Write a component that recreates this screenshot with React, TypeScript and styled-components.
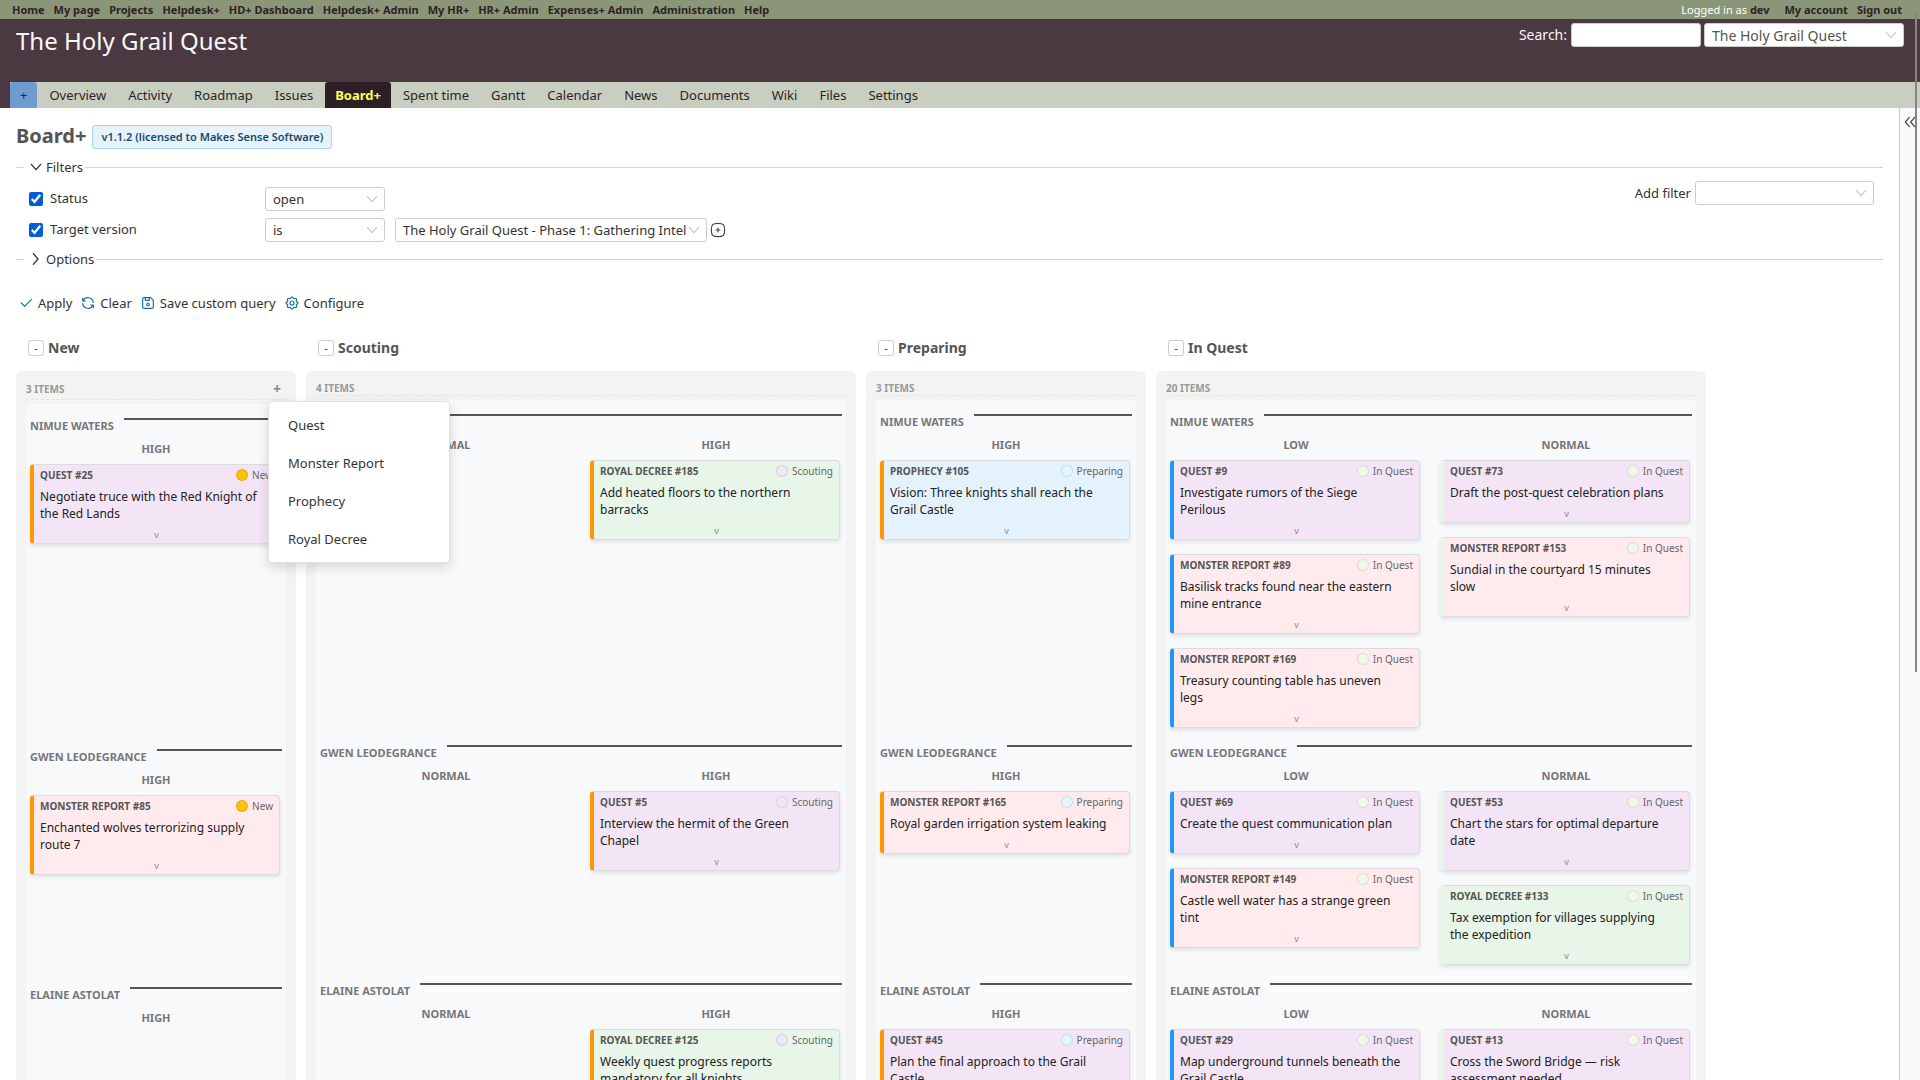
import React from "react";
import styled, { createGlobalStyle, css } from "styled-components";

const FONT = '"Noto Sans", "Open Sans", sans-serif';

const GlobalStyle = createGlobalStyle`
  *, *::before, *::after { box-sizing: border-box; }
  html, body { margin: 0; padding: 0; }
  body { background: #fff; color: #333; font-family: ${FONT}; font-size: 13px; line-height: 16px; }
  button, input, select { font-family: inherit; color: inherit; margin: 0; }
  a { color: inherit; text-decoration: none; }
  h1, h2, h3, h4, p, ul { margin: 0; padding: 0; }
  ul { list-style: none; }
`;

/* ---------- icons ---------- */

const ICONS: Record<string, string[]> = {
  check: ["M5 12l5 5l10 -10"],
  refresh: ["M20 11a8.1 8.1 0 0 0 -15.5 -2m-.5 -4v4h4", "M4 13a8.1 8.1 0 0 0 15.5 2m.5 4v-4h-4"],
  save: [
    "M6 4h10l4 4v10a2 2 0 0 1 -2 2h-12a2 2 0 0 1 -2 -2v-12a2 2 0 0 1 2 -2",
    "M10 14a2 2 0 1 0 4 0a2 2 0 1 0 -4 0",
    "M14 4v4h-6v-4",
  ],
  settings: [
    "M10.325 4.317c.426 -1.756 2.924 -1.756 3.35 0a1.724 1.724 0 0 0 2.573 1.066c1.543 -.94 3.31 .826 2.37 2.37a1.724 1.724 0 0 0 1.065 2.572c1.756 .426 1.756 2.924 0 3.35a1.724 1.724 0 0 0 -1.066 2.573c.94 1.543 -.826 3.31 -2.37 2.37a1.724 1.724 0 0 0 -2.572 1.065c-.426 1.756 -2.924 1.756 -3.35 0a1.724 1.724 0 0 0 -2.573 -1.066c-1.543 .94 -3.31 -.826 -2.37 -2.37a1.724 1.724 0 0 0 -1.065 -2.572c-1.756 -.426 -1.756 -2.924 0 -3.35a1.724 1.724 0 0 0 1.066 -2.573c-.94 -1.543 .826 -3.31 2.37 -2.37c1 .608 2.296 .07 2.572 -1.065z",
    "M9 12a3 3 0 1 0 6 0a3 3 0 0 0 -6 0",
  ],
  down: ["M5 8l7 8l7 -8"],
  right: ["M8 4l7 8l-7 8"],
  collapse: ["M11 5l-6 7l6 7", "M19 5l-6 7l6 7"],
  plus: ["M9 12h6", "M12 9v6", "M12 2c8 0 10 2 10 10s-2 10 -10 10s-10 -2 -10 -10s2 -10 10 -10z"],
};

const IconSvg = styled.svg`
  display: block;
  flex: none;
  fill: none;
  stroke: currentColor;
  stroke-linecap: round;
  stroke-linejoin: round;
`;

function Icon({ name, size = 16, weight = 1.75 }: { name: string; size?: number; weight?: number }) {
  return (
    <IconSvg width={size} height={size} viewBox="0 0 24 24" strokeWidth={weight} aria-hidden="true">
      {ICONS[name].map((d) => (
        <path key={d} d={d} />
      ))}
    </IconSvg>
  );
}

/* ---------- page chrome ---------- */

const Page = styled.div`
  position: relative;
  height: 100vh;
  overflow: hidden;
`;

const Scroller = styled.div`
  height: 100%;
  display: flex;
  flex-direction: column;
  overflow-x: hidden;
  overflow-y: auto;
  scrollbar-width: none;
`;

const ScrollThumb = styled.div`
  position: absolute;
  top: 13px;
  right: 3px;
  width: 2px;
  height: 61%;
  background: #858585;
`;

const TopMenu = styled.nav`
  flex: none;
  display: flex;
  justify-content: space-between;
  height: 19px;
  padding: 0 18px 0 12px;
  background: #8b9678;
  color: #2e1f27;
  font-size: 11px;
  line-height: 19px;
  font-weight: 700;
`;

const MenuList = styled.ul`
  display: flex;
  gap: 9px;
`;

const LoggedAs = styled.li`
  margin-right: 6px;
  font-weight: 400;
  color: #fff;
  a { font-weight: 700; color: #2e1f27; }
`;

const Header = styled.header`
  flex: none;
  display: flex;
  justify-content: space-between;
  height: 63px;
  padding: 4px 16px 0;
  background: #4b3942;
  color: #f8f8f8;
`;

const ProjectTitle = styled.h1`
  font-size: 24px;
  line-height: 36px;
  font-weight: 400;
`;

const QuickSearch = styled.form`
  display: flex;
  align-items: center;
  height: 24px;
  gap: 3px;
  font-size: 14px;
  label { margin-right: 1px; }
`;

const SearchInput = styled.input`
  width: 130px;
  height: 24px;
  padding: 0 6px;
  border: 1px solid #ccc;
  border-radius: 3px;
  background: #fff;
  color: #555;
  font-size: 14px;
`;

const SelectWrap = styled.span<{ $w: number }>`
  display: inline-grid;
  grid-template-columns: 1fr;
  align-items: center;
  width: ${(p) => p.$w}px;
  color: #c4c6d2;
  > * { grid-area: 1 / 1; }
  > svg { justify-self: end; margin-right: 5px; pointer-events: none; }
`;

const Select = styled.select<{ $size?: number; $tone?: string }>`
  appearance: none;
  width: 100%;
  height: 24px;
  padding: 0 16px 0 7px;
  border: 1px solid #ccc;
  border-radius: 3px;
  background: #fff;
  color: ${(p) => p.$tone ?? "#333"};
  font-size: ${(p) => p.$size ?? 13}px;
`;

function DropDown(props: { id: string; label?: string; options: string[]; width: number; size?: number; tone?: string }) {
  return (
    <SelectWrap $w={props.width}>
      <Select id={props.id} aria-label={props.label} $size={props.size} $tone={props.tone}>
        {props.options.map((o) => (
          <option key={o}>{o}</option>
        ))}
      </Select>
      <Icon name="down" size={16} />
    </SelectWrap>
  );
}

const TabStrip = styled.nav`
  flex: none;
  display: flex;
  height: 26px;
  padding-left: 10px;
  background: linear-gradient(#4b3942, #4b3942) left / 10px 100% no-repeat #c8cec0;
  font-size: 13px;
  line-height: 26px;
  gap: 2px;
`;

const Tab = styled.a<{ $kind?: "new" | "selected" }>`
  padding: 0 10px;
  border-radius: 3px 3px 0 0;
  color: #2e1f27;
  ${(p) => p.$kind === "new" && css`background: #6f9ccf;`}
  ${(p) => p.$kind === "selected" && css`background: #2e1f27; color: #ffff55; font-weight: 700;`}
`;

const Main = styled.div`
  flex: 1 0 auto;
  display: flex;
`;

const Content = styled.main`
  flex: 1;
  min-width: 0;
  padding: 15px 16px 0;
`;

const Sidebar = styled.aside`
  flex: none;
  width: 21px;
  padding: 6px 0 0 2px;
  border-left: 1px solid #ccc;
  background: #f8f9fb;
`;

const IconButton = styled.button`
  display: block;
  padding: 0;
  border: 0;
  background: none;
  color: #444;
`;

/* ---------- query form ---------- */

const TitleRow = styled.div`
  display: flex;
  align-items: center;
  gap: 6px;
  height: 26px;
`;

const PageTitle = styled.h2`
  color: #555;
  font-size: 20px;
  line-height: 24px;
  font-weight: 700;
`;

const Badge = styled.span`
  margin-top: 2px;
  padding: 2px 8px;
  border: 1px solid #a9d3ea;
  border-radius: 3px;
  background: #e6f3fd;
  color: #17496d;
  font-size: 11px;
  line-height: 18px;
  font-weight: 600;
`;

const FilterSet = styled.fieldset<{ $open?: boolean }>`
  min-width: 0;
  margin: 0;
  padding: ${(p) => (p.$open ? "4px 9px 9px 0" : "0")};
  border: 0;
  border-top: 1px solid #d0d4d8;
  display: flex;
  justify-content: space-between;
  align-items: flex-start;
`;

const Legend = styled.legend`
  margin-left: 8px;
  padding: 0 2px;
`;

const LegendButton = styled.button`
  display: flex;
  align-items: center;
  gap: 2px;
  height: 16px;
  padding: 0 0 0 2px;
  border: 0;
  background: none;
  font-size: 13px;
  line-height: 16px;
`;

const Query = styled.form`
  margin-top: 10px;
`;

const FilterRows = styled.div`
  display: grid;
  grid-template-columns: 237px auto auto;
  justify-content: start;
  row-gap: 7px;
  padding: 8px 0 0 12px;
`;

const FilterRow = styled.div`
  display: grid;
  grid-template-columns: subgrid;
  grid-column: 1 / -1;
  align-items: center;
  height: 24px;
`;

const CheckLabel = styled.label`
  display: flex;
  align-items: flex-start;
  gap: 7px;
  padding: 0 0 2px 1px;
  line-height: 18px;
`;

const Check = styled.input`
  width: 14px;
  height: 14px;
  margin-top: 3px;
  accent-color: #005fd7;
`;

const ValueCell = styled.div`
  display: flex;
  align-items: center;
  gap: 3px;
  margin-left: 10px;
`;

const AddFilter = styled.div`
  display: flex;
  align-items: center;
  gap: 4px;
  padding-top: 2px;
`;

const Actions = styled.div`
  display: flex;
  align-items: center;
  gap: 8px;
  height: 20px;
  margin: 26px 0 0 2px;
`;

const Action = styled.button`
  display: flex;
  align-items: center;
  gap: 4px;
  padding: 0;
  border: 0;
  background: none;
  font-size: 13px;
  line-height: 20px;
  svg { color: #1b6f96; }
`;

/* ---------- board ---------- */

const Board = styled.div`
  display: flex;
  gap: 10px;
  margin-top: 23px;
`;

const Column = styled.section<{ $lanes: number }>`
  flex: none;
  display: flex;
  flex-direction: column;
  width: ${(p) => p.$lanes * 270 + 10}px;
`;

const ColumnTitle = styled.div`
  display: flex;
  align-items: center;
  gap: 4px;
  height: 24px;
  padding-left: 12px;
  h3 { color: #555; font-size: 14px; line-height: 24px; font-weight: 700; }
`;

const Toggle = styled.button`
  width: 16px;
  height: 16px;
  padding: 0;
  border: 1px solid #ccc;
  border-radius: 3px;
  background: #fff;
  color: #333;
  font-size: 11px;
  line-height: 14px;
`;

const ColumnBody = styled.div`
  flex: 1;
  margin-top: 11px;
  padding: 10px;
  border-radius: 6px;
  background: #f3f3f3;
`;

const ColumnBar = styled.div<{ $tall: boolean }>`
  display: flex;
  align-items: center;
  justify-content: space-between;
  height: ${(p) => (p.$tall ? 19 : 15)}px;
  padding-bottom: ${(p) => (p.$tall ? 2 : 0)}px;
  border-bottom: 1px dashed #e4e4e4;
  color: #999;
  font-size: 10px;
  line-height: 14px;
  font-weight: 700;
`;

const AddWrap = styled.div`
  position: relative;
  z-index: 2;
`;

const AddButton = styled.button`
  display: block;
  width: 18px;
  height: 16px;
  padding: 0;
  border: 0;
  background: none;
  color: #888;
  font-size: 14px;
  line-height: 16px;
  font-weight: 700;
`;

const TrackerMenu = styled.ul`
  position: absolute;
  top: 20px;
  left: 0;
  width: 182px;
  padding: 4px 0;
  border: 1px solid #e2e2e2;
  border-radius: 4px;
  background: #fff;
  box-shadow: 0 4px 12px rgba(0, 0, 0, 0.15);
`;

const TrackerItem = styled.button`
  display: block;
  width: 100%;
  padding: 0 19px;
  border: 0;
  background: none;
  color: #333;
  font-size: 13px;
  font-weight: 400;
  line-height: 38px;
  text-align: left;
`;

const Lanes = styled.div`
  margin-top: 4px;
  padding: 14px 4px 0;
  background: #f8f9fb;
`;

const Lane = styled.section<{ $min: number }>`
  min-height: ${(p) => p.$min}px;
`;

const LaneHead = styled.div`
  display: flex;
  align-items: flex-start;
  gap: 10px;
  &::after { content: ""; flex: 1; height: 2px; background: #555; }
  h4 { color: #777; font-size: 11px; line-height: 16px; font-weight: 700; }
`;

const Cells = styled.div`
  display: flex;
  gap: 18px;
  margin-top: 7px;
`;

const Cell = styled.div`
  flex: 1;
  min-width: 0;
`;

const Priority = styled.p`
  margin-bottom: 7px;
  color: #777;
  font-size: 11px;
  line-height: 16px;
  font-weight: 700;
  text-align: center;
`;

const Stack = styled.div`
  display: flex;
  flex-direction: column;
  gap: 14px;
  padding-right: 2px;
`;

const CardBox = styled.article<{ $bg: string; $edge: string }>`
  padding: 2px 6px;
  border: 1px solid #dcdcdc;
  border-left: 4px solid ${(p) => p.$edge};
  border-radius: 4px;
  background: ${(p) => p.$bg};
  box-shadow: 0 2px 4px rgba(0, 0, 0, 0.1);
`;

const CardHead = styled.div`
  display: flex;
  align-items: center;
  justify-content: space-between;
  height: 16px;
  font-size: 10px;
  line-height: 16px;
  color: #666;
`;

const CardId = styled.a`
  color: #555;
  font-weight: 700;
`;

const Status = styled.span<{ $dot: string }>`
  display: flex;
  align-items: center;
  gap: 4px;
  &::before {
    content: "";
    width: 12px;
    height: 12px;
    border: 1px solid rgba(0, 0, 0, 0.1);
    border-radius: 50%;
    background: ${(p) => p.$dot};
  }
`;

const CardTitle = styled.p`
  margin-top: 5px;
  padding-right: 8px;
  color: #222;
  font-size: 12px;
  line-height: 17px;
`;

const Expand = styled.button`
  display: block;
  width: 100%;
  margin-top: 7px;
  padding: 0;
  border: 0;
  background: none;
  color: #888;
  font-size: 9px;
  line-height: 12px;
`;

type CardData = [id: string, title: string];
type Cards = Record<string, CardData[]>;

const TRACKER_BG: Record<string, string> = {
  QUEST: "#f3e5f5",
  MONSTER: "#ffebee",
  ROYAL: "#e8f5e9",
  PROPHECY: "#e3f2fd",
};
const PRIORITY_EDGE: Record<string, string> = { LOW: "#2196f3", NORMAL: "#e8f5e9", HIGH: "#ff9800" };
const STATUS_DOT: Record<string, string> = {
  New: "#ffc107",
  Scouting: "#ede7f6",
  Preparing: "#e0f7fa",
  "In Quest": "#f1f8e9",
};

const PEOPLE = [
  { name: "NIMUE WATERS", min: 331 },
  { name: "GWEN LEODEGRANCE", min: 238 },
  { name: "ELAINE ASTOLAT", min: 238 },
];

const COLUMNS: { status: string; items: number; priorities: string[]; lanes: Cards[] }[] = [
  {
    status: "New",
    items: 3,
    priorities: ["HIGH"],
    lanes: [
      { HIGH: [["QUEST #25", "Negotiate truce with the Red Knight of the Red Lands"]] },
      { HIGH: [["MONSTER REPORT #85", "Enchanted wolves terrorizing supply route 7"]] },
      {},
    ],
  },
  {
    status: "Scouting",
    items: 4,
    priorities: ["NORMAL", "HIGH"],
    lanes: [
      { HIGH: [["ROYAL DECREE #185", "Add heated floors to the northern barracks"]] },
      { HIGH: [["QUEST #5", "Interview the hermit of the Green Chapel"]] },
      { HIGH: [["ROYAL DECREE #125", "Weekly quest progress reports mandatory for all knights"]] },
    ],
  },
  {
    status: "Preparing",
    items: 3,
    priorities: ["HIGH"],
    lanes: [
      { HIGH: [["PROPHECY #105", "Vision: Three knights shall reach the Grail Castle"]] },
      { HIGH: [["MONSTER REPORT #165", "Royal garden irrigation system leaking"]] },
      { HIGH: [["QUEST #45", "Plan the final approach to the Grail Castle"]] },
    ],
  },
  {
    status: "In Quest",
    items: 20,
    priorities: ["LOW", "NORMAL"],
    lanes: [
      {
        LOW: [
          ["QUEST #9", "Investigate rumors of the Siege Perilous"],
          ["MONSTER REPORT #89", "Basilisk tracks found near the eastern mine entrance"],
          ["MONSTER REPORT #169", "Treasury counting table has uneven legs"],
        ],
        NORMAL: [
          ["QUEST #73", "Draft the post-quest celebration plans"],
          ["MONSTER REPORT #153", "Sundial in the courtyard 15 minutes slow"],
        ],
      },
      {
        LOW: [
          ["QUEST #69", "Create the quest communication plan"],
          ["MONSTER REPORT #149", "Castle well water has a strange green tint"],
        ],
        NORMAL: [
          ["QUEST #53", "Chart the stars for optimal departure date"],
          ["ROYAL DECREE #133", "Tax exemption for villages supplying the expedition"],
        ],
      },
      {
        LOW: [["QUEST #29", "Map underground tunnels beneath the Grail Castle"]],
        NORMAL: [["QUEST #13", "Cross the Sword Bridge — risk assessment needed"]],
      },
    ],
  },
];

const TRACKERS = ["Quest", "Monster Report", "Prophecy", "Royal Decree"];

function IssueCard({ data, status, priority }: { data: CardData; status: string; priority: string }) {
  const [id, title] = data;
  return (
    <CardBox $bg={TRACKER_BG[id.split(" ")[0]]} $edge={PRIORITY_EDGE[priority]}>
      <CardHead>
        <CardId href="#">{id}</CardId>
        <Status $dot={STATUS_DOT[status]}>{status}</Status>
      </CardHead>
      <CardTitle>{title}</CardTitle>
      <Expand type="button">v</Expand>
    </CardBox>
  );
}

const MENU = [
  "Home", "My page", "Projects", "Helpdesk+", "HD+ Dashboard", "Helpdesk+ Admin", "My HR+",
  "HR+ Admin", "Expenses+ Admin", "Administration", "Help",
];
const TABS = [
  "Overview", "Activity", "Roadmap", "Issues", "Board+", "Spent time", "Gantt", "Calendar", "News",
  "Documents", "Wiki", "Files", "Settings",
];

export default function App() {
  return (
    <Page>
      <GlobalStyle />
      <Scroller>
        <TopMenu>
          <MenuList>
            {MENU.map((m) => (
              <li key={m}><a href="#">{m}</a></li>
            ))}
          </MenuList>
          <MenuList>
            <LoggedAs>Logged in as <a href="#">dev</a></LoggedAs>
            <li><a href="#">My account</a></li>
            <li><a href="#">Sign out</a></li>
          </MenuList>
        </TopMenu>
        <Header>
          <ProjectTitle>The Holy Grail Quest</ProjectTitle>
          <QuickSearch>
            <label htmlFor="q">Search:</label>
            <SearchInput id="q" type="text" />
            <DropDown id="project" label="Project" options={["The Holy Grail Quest"]} width={200} size={14} tone="#555" />
          </QuickSearch>
        </Header>
        <TabStrip>
          <Tab href="#" $kind="new">+</Tab>
          {TABS.map((t) => (
            <Tab key={t} href="#" $kind={t === "Board+" ? "selected" : undefined}>{t}</Tab>
          ))}
        </TabStrip>
        <Main>
          <Content>
            <TitleRow>
              <PageTitle>Board+</PageTitle>
              <Badge>v1.1.2 (licensed to Makes Sense Software)</Badge>
            </TitleRow>
            <Query>
              <FilterSet $open>
                <Legend>
                  <LegendButton type="button"><Icon name="down" weight={2} />Filters</LegendButton>
                </Legend>
                <FilterRows>
                  <FilterRow>
                    <CheckLabel><Check type="checkbox" defaultChecked />Status</CheckLabel>
                    <DropDown id="op-status" label="Status operator" options={["open"]} width={120} />
                  </FilterRow>
                  <FilterRow>
                    <CheckLabel><Check type="checkbox" defaultChecked />Target version</CheckLabel>
                    <DropDown id="op-version" label="Target version operator" options={["is"]} width={120} />
                    <ValueCell>
                      <DropDown
                        id="version"
                        label="Target version value"
                        options={["The Holy Grail Quest - Phase 1: Gathering Intel"]}
                        width={312}
                      />
                      <IconButton type="button" aria-label="Select several values"><Icon name="plus" /></IconButton>
                    </ValueCell>
                  </FilterRow>
                </FilterRows>
                <AddFilter>
                  <label htmlFor="add-filter">Add filter</label>
                  <DropDown id="add-filter" options={[""]} width={179} />
                </AddFilter>
              </FilterSet>
              <FilterSet>
                <Legend>
                  <LegendButton type="button"><Icon name="right" weight={2} />Options</LegendButton>
                </Legend>
              </FilterSet>
              <Actions>
                <Action type="submit"><Icon name="check" />Apply</Action>
                <Action type="reset"><Icon name="refresh" />Clear</Action>
                <Action type="button"><Icon name="save" />Save custom query</Action>
                <Action type="button"><Icon name="settings" />Configure</Action>
              </Actions>
            </Query>
            <Board>
              {COLUMNS.map((col) => (
                <Column key={col.status} $lanes={col.priorities.length}>
                  <ColumnTitle>
                    <Toggle type="button" aria-label={`Collapse ${col.status}`}>-</Toggle>
                    <h3>{col.status}</h3>
                  </ColumnTitle>
                  <ColumnBody>
                    <ColumnBar $tall={col.status === "New"}>
                      <span>{col.items} ITEMS</span>
                      {col.status === "New" && (
                        <AddWrap>
                          <AddButton type="button" aria-label="Add issue">+</AddButton>
                          <TrackerMenu>
                            {TRACKERS.map((t) => (
                              <li key={t}><TrackerItem type="button">{t}</TrackerItem></li>
                            ))}
                          </TrackerMenu>
                        </AddWrap>
                      )}
                    </ColumnBar>
                    <Lanes>
                      {PEOPLE.map((person, i) => (
                        <Lane key={person.name} $min={person.min}>
                          <LaneHead><h4>{person.name}</h4></LaneHead>
                          <Cells>
                            {col.priorities.map((p) => (
                              <Cell key={p}>
                                <Priority>{p}</Priority>
                                <Stack>
                                  {(col.lanes[i][p] ?? []).map((c) => (
                                    <IssueCard key={c[0]} data={c} status={col.status} priority={p} />
                                  ))}
                                </Stack>
                              </Cell>
                            ))}
                          </Cells>
                        </Lane>
                      ))}
                    </Lanes>
                  </ColumnBody>
                </Column>
              ))}
            </Board>
          </Content>
          <Sidebar>
            <IconButton type="button" aria-label="Show sidebar"><Icon name="collapse" /></IconButton>
          </Sidebar>
        </Main>
      </Scroller>
      <ScrollThumb />
    </Page>
  );
}
